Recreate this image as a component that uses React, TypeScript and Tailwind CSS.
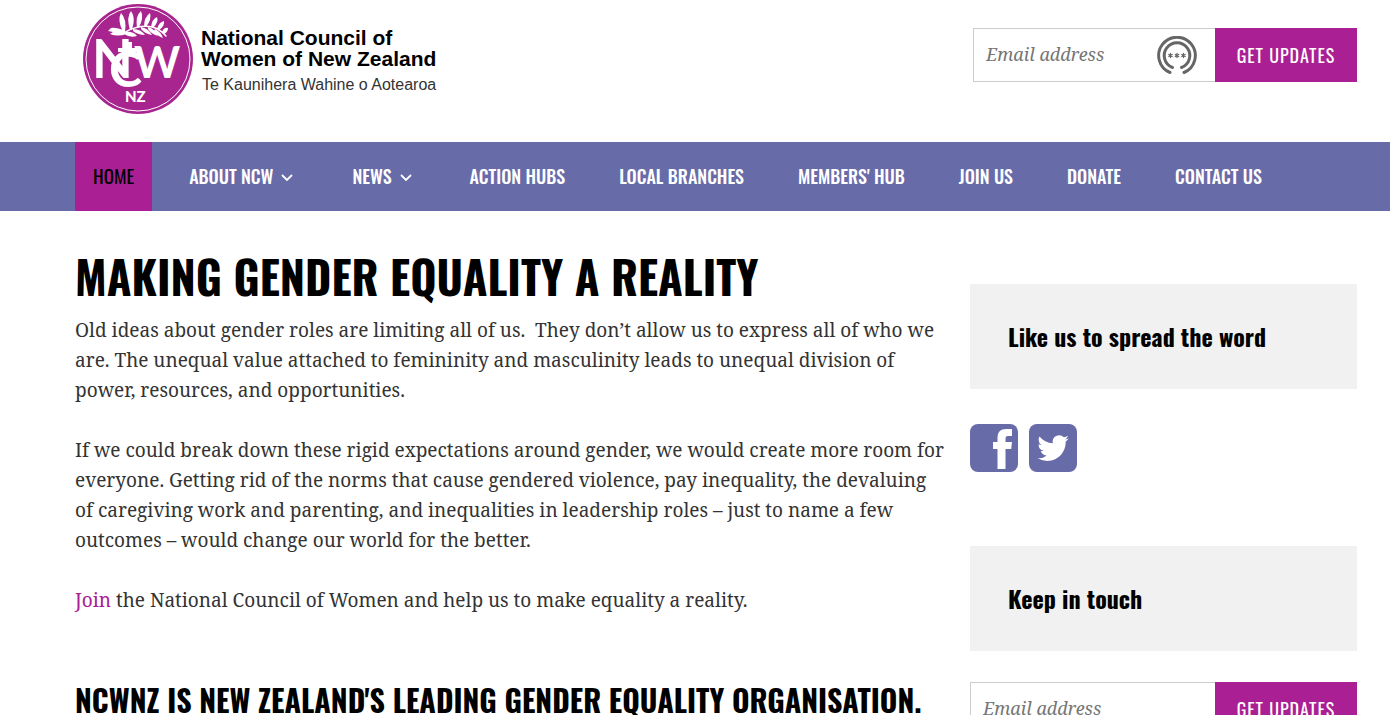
import React from "react";

const heading = "font-['Oswald','Liberation_Sans_Narrow','Roboto_Condensed',sans-serif]";

const navItems = [
  { label: "ABOUT NCW", menu: true },
  { label: "NEWS", menu: true },
  { label: "ACTION HUBS" },
  { label: "LOCAL BRANCHES" },
  { label: "MEMBERS' HUB" },
  { label: "JOIN US" },
  { label: "DONATE" },
  { label: "CONTACT US" },
];

function Emblem() {
  return (
    <svg viewBox="0 0 112 112" className="size-28 shrink-0" aria-hidden="true">
      <circle cx="56" cy="56" r="55" fill="#a8258f" />
      <circle cx="56" cy="56" r="52" fill="none" stroke="#fff" strokeWidth="1" />
      <path d="M41 31C48 25 60 22 70 24Q78 26 84 33" fill="none" stroke="#fff" strokeWidth="1.5" strokeLinecap="round" />
      <g fill="#fff">
        <path d="M43 28Q34 24 29 25L26 28L31 29L28 31Q36 34 44 31Z" />
        <path d="M41 29Q35 17 39 10Q45 16 43 29Z" />
        <path d="M48 27Q44 14 49 8Q54 15 50 26Z" />
        <path d="M55 25Q53 13 59 8Q62 15 57 24Z" />
        <path d="M62 24Q62 14 68 10Q70 16 64 24Z" />
        <path d="M69 24Q70 16 75 14Q77 19 71 25Z" />
        <path d="M75 26Q77 19 82 18Q83 23 77 27Z" />
        <path d="M80 29Q82 24 86 25Q86 29 82 31Z" />
        <path d="M43 29Q51 28 55 33Q48 35 42 31Z" />
        <path d="M51 26Q59 26 63 32Q56 32 51 28Z" />
        <path d="M59 24Q66 25 70 32Q63 31 59 26Z" />
        <path d="M66 24Q73 26 76 33Q69 31 66 26Z" />
        <path d="M73 26Q79 29 81 35Q75 33 72 28Z" />
      </g>
      <path d="M36 47H57" fill="none" stroke="#fff" strokeWidth="4" />
      <path d="M48 39V50" fill="none" stroke="#fff" strokeWidth="4" />
      <g fill="#fff" fontFamily="Lato, 'Liberation Sans', sans-serif" fontWeight="700">
        <text x="10" y="75" fontSize="53">N</text>
        <text x="52" y="75" fontSize="44">W</text>
        <text x="27" y="84" fontSize="50">C</text>
        <text x="43" y="99" fontSize="15" fontWeight="900">NZ</text>
      </g>
    </svg>
  );
}

function CaptchaIcon() {
  return (
    <svg viewBox="0 0 40 40" className="pointer-events-none absolute right-[18px] top-2 size-10" fill="none" stroke="#666" strokeWidth="3" strokeLinecap="round" aria-hidden="true">
      <path d="M13 36.5A18.3 18.3 0 1 1 27 36.5" />
      <path d="M15.500 31.5A12.8 12.8 0 1 1 24.5 31.5" />
      <path d="M13.5 17.5v4M11.8 18.5l3.4 2M11.8 20.5l3.4-2M20 17.5v4M18.3 18.5l3.4 2M18.3 20.5l3.4-2M26.5 17.5v4M24.8 18.5l3.4 2M24.8 20.5l3.4-2" strokeWidth="1.3" />
    </svg>
  );
}

function SignUp({ id, icon }: { id: string; icon?: boolean }) {
  return (
    <form className="flex h-[54px] w-full" onSubmit={(e) => e.preventDefault()}>
      <label htmlFor={id} className="sr-only">Email address</label>
      <div className="relative min-w-0 flex-1">
        <input
          id={id}
          type="email"
          placeholder="Email address"
          className="h-full w-full border border-r-0 border-[#ccc] bg-white px-3 pb-0.5 font-['Noto_Serif','DejaVu_Serif_Condensed','DejaVu_Serif',serif] text-lg italic text-[#333] placeholder:text-[#757575]"
        />
        {icon && <CaptchaIcon />}
      </div>
      <button className={`${heading} w-[142px] shrink-0 bg-[#aa2094] text-lg tracking-[1px] text-white`}>GET UPDATES</button>
    </form>
  );
}

function Facebook() {
  return (
    <svg viewBox="0 0 48 48" className="size-12" aria-hidden="true">
      <rect width="48" height="48" rx="8" fill="#676ba8" />
      <path d="M27.5 45V25H23v-7h4.5v-4c0-6 3-9 8.5-9h6v7h-4c-2 0-2.5 1-2.5 3v3H42l-.8 7h-5.700v20Z" fill="#fff" />
    </svg>
  );
}

function Twitter() {
  return (
    <svg viewBox="0 0 48 48" className="size-12" aria-hidden="true">
      <rect width="48" height="48" rx="8" fill="#676ba8" />
      <path transform="translate(7 7.5) scale(1.39)" d="M23.643 4.937c-.835.37-1.732.62-2.675.733a4.670 4.670 0 0 0 2.048-2.578 9.300 9.300 0 0 1-2.958 1.130 4.660 4.660 0 0 0-7.938 4.250 13.229 13.229 0 0 1-9.602-4.868c-.4.690-.63 1.490-.63 2.342A4.660 4.660 0 0 0 3.960 9.824a4.647 4.647 0 0 1-2.110-.583v.06a4.660 4.660 0 0 0 3.737 4.568 4.692 4.692 0 0 1-2.104.08 4.661 4.661 0 0 0 4.352 3.234 9.348 9.348 0 0 1-5.786 1.995 9.500 9.500 0 0 1-1.112-.065 13.175 13.175 0 0 0 7.140 2.093c8.570 0 13.255-7.098 13.255-13.254 0-.2-.005-.402-.014-.602a9.470 9.470 0 0 0 2.323-2.410z" fill="#fff" />
    </svg>
  );
}

export default function App() {
  return (
    <div className="h-screen overflow-hidden bg-white font-['Noto_Serif','DejaVu_Serif_Condensed','DejaVu_Serif',serif] text-[#333]">
      <header className="flex h-[142px] items-start justify-between pl-[82px] pr-[33px]">
        <a href="#" className="flex gap-[7px] pt-[3px]">
          <Emblem />
          <span className="pt-6 font-['Liberation_Sans',sans-serif] text-black">
            <span className="block text-[21px] font-bold leading-[21px]">National Council of<br />Women of New Zealand</span>
            <span className="mt-[6px] block pl-px text-base leading-5 text-[#333]">Te Kaunihera Wahine o Aotearoa</span>
          </span>
        </a>
        <div className="mt-7 w-96">
          <SignUp id="email-top" icon />
        </div>
      </header>

      <nav className={`${heading} flex h-[69px] gap-[18px] bg-[#676ba8] pl-[75px] text-lg font-medium text-white`}>
        <a href="#" className="flex items-center bg-[#aa2094] px-[18px] pb-px text-[19px] font-normal text-black">HOME</a>
        {navItems.map((item) => (
          <a key={item.label} href="#" className={`flex items-center whitespace-nowrap pb-px ${item.menu ? "gap-2 pl-[19px] pr-[22px]" : "px-[18px]"}`}>
            {item.label}
            {item.menu && (
              <svg viewBox="0 0 12 8" className="mt-1 h-2 w-3" fill="none" stroke="currentColor" strokeWidth="1.8" aria-hidden="true">
                <path d="M1 1l5 5 5-5" />
              </svg>
            )}
          </a>
        ))}
      </nav>

      <div className="flex gap-6 pl-[75px] pr-[33px]">
        <main className="min-w-0 flex-1 pt-9 text-[19px] leading-[30px]">
          <h1 className={`${heading} pb-2.5 whitespace-nowrap text-[45px] font-bold leading-[58px] text-black`}>MAKING GENDER EQUALITY A REALITY</h1>
          <p className="mb-[30px]">Old ideas about gender roles are limiting all of us.&nbsp; They don’t allow us to express all of who we are. The unequal value attached to femininity and masculinity leads to unequal division of power, resources, and opportunities.</p>
          <p className="mb-[30px]">If we could break down these rigid expectations around gender, we would create more room for everyone. Getting rid of the norms that cause gendered violence, pay inequality, the devaluing of caregiving work and parenting, and inequalities in leadership roles – just to name a few outcomes – would change our world for the better.</p>
          <p><a href="#" className="text-[#aa2094]">Join</a> the National Council of Women and help us to make equality a reality.</p>
          <h2 className={`${heading} mt-[60px] whitespace-nowrap text-3xl font-bold leading-[50px] text-black`}>NCWNZ IS NEW ZEALAND'S LEADING GENDER EQUALITY ORGANISATION.</h2>
        </main>
        <aside className="w-[387px] shrink-0 pt-[73px]">
          <h3 className={`${heading} bg-[#f1f1f1] px-[38px] py-9 text-2xl font-bold leading-[33px] text-black`}>Like us to spread the word</h3>
          <div className="mb-[74px] mt-[35px] flex gap-[11px]">
            <a href="#" aria-label="Facebook"><Facebook /></a>
            <a href="#" aria-label="Twitter"><Twitter /></a>
          </div>
          <h3 className={`${heading} mb-[31px] bg-[#f1f1f1] px-[38px] py-9 text-2xl font-bold leading-[33px] text-black`}>Keep in touch</h3>
          <SignUp id="email-side" />
        </aside>
      </div>
    </div>
  );
}
